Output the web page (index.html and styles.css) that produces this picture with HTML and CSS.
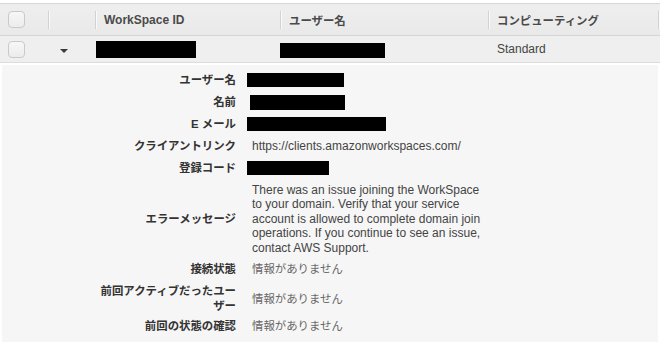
FILE: index.html
```html
<!DOCTYPE html>
<html lang="ja">

<head>
    <meta charset="UTF-8">
    <meta name="viewport" content="width=device-width, initial-scale=1.0">
    <title>WorkSpaces</title>
    <link rel="stylesheet" href="styles.css">
</head>

<body>
    <div class="ws-table">
        <table>
            <colgroup>
                <col class="col-check">
                <col class="col-toggle">
                <col class="col-id">
                <col class="col-user">
                <col class="col-compute">
            </colgroup>
            <thead>
                <tr>
                    <th><span class="checkbox"></span></th>
                    <th class="sep"></th>
                    <th class="sep">WorkSpace ID</th>
                    <th class="sep jp">ユーザー名</th>
                    <th class="sep sep-end jp">コンピューティング</th>
                </tr>
            </thead>
            <tbody>
                <tr>
                    <td><span class="checkbox"></span></td>
                    <td class="toggle"><span class="caret"></span></td>
                    <td><span class="redacted redacted-id"></span></td>
                    <td><span class="redacted redacted-user"></span></td>
                    <td>Standard</td>
                </tr>
            </tbody>
        </table>

        <!-- expanded details of the selected WorkSpace -->
        <div class="details">
            <div class="detail-row">
                <div class="detail-label">ユーザー名</div>
                <div class="detail-value"><span class="redacted redacted-username"></span></div>
            </div>
            <div class="detail-row">
                <div class="detail-label">名前</div>
                <div class="detail-value"><span class="redacted redacted-name"></span></div>
            </div>
            <div class="detail-row">
                <div class="detail-label">E メール</div>
                <div class="detail-value"><span class="redacted redacted-mail"></span></div>
            </div>
            <div class="detail-row">
                <div class="detail-label">クライアントリンク</div>
                <div class="detail-value">https://clients.amazonworkspaces.com/</div>
            </div>
            <div class="detail-row">
                <div class="detail-label">登録コード</div>
                <div class="detail-value"><span class="redacted redacted-code"></span></div>
            </div>
            <div class="detail-row">
                <div class="detail-label">エラーメッセージ</div>
                <div class="detail-value error-text">There was an issue joining the WorkSpace to your domain. Verify that your service account is allowed to complete domain join operations. If you continue to see an issue, contact AWS Support.</div>
            </div>
            <div class="detail-row">
                <div class="detail-label">接続状態</div>
                <div class="detail-value empty">情報がありません</div>
            </div>
            <div class="detail-row">
                <div class="detail-label">前回アクティブだったユー<br>ザー</div>
                <div class="detail-value empty">情報がありません</div>
            </div>
            <div class="detail-row last">
                <div class="detail-label">前回の状態の確認</div>
                <div class="detail-value empty">情報がありません</div>
            </div>
        </div>
    </div>
</body>

</html>
```

FILE: styles.css
```css
body {
    font-family: "Liberation Sans", Arial, "Noto Sans CJK JP", sans-serif;
    font-size: 12px;
    color: #444;
    background-color: #fff;
    margin: 0;
    padding: 3px 0 0 0;
}

.jp {
    font-size: 11.4px;
}

.ws-table table {
    width: 660px;
    border-collapse: collapse;
    table-layout: fixed;
    border-top: 1px solid #d8d8d8;
}

.col-check {
    width: 48px;
}

.col-toggle {
    width: 47px;
}

.col-id {
    width: 185px;
}

.col-user {
    width: 208px;
}

.ws-table th {
    position: relative;
    height: 31px;
    padding: 0 0 0 9px;
    background: linear-gradient(#eeeeee, #e9e9e9);
    border-bottom: 1px solid #d6d6d6;
    text-align: left;
    font-weight: bold;
    color: #4a4a4a;
}

.ws-table th:first-child,
.ws-table td:first-child {
    padding-left: 8px;
}

/* embossed column dividers in the header */
.ws-table th.sep::before {
    content: "";
    position: absolute;
    left: 0;
    top: 7px;
    bottom: 6px;
    width: 1px;
    background-color: #d2d2d2;
    box-shadow: 1px 0 0 #fafafa;
}

.ws-table th.sep-end::after {
    content: "";
    position: absolute;
    right: 1px;
    top: 7px;
    bottom: 6px;
    width: 1px;
    background-color: #d2d2d2;
    box-shadow: 1px 0 0 #fafafa;
}

.ws-table td {
    height: 26px;
    padding: 0 0 0 9px;
    background-color: #efefef;
    border-bottom: 1px solid #dcdcdc;
    vertical-align: middle;
}

.ws-table td:nth-child(3) {
    padding-left: 1px;
}

.ws-table td:nth-child(4) {
    padding-left: 0;
}

.checkbox {
    display: block;
    width: 15px;
    height: 15px;
    border: 1px solid #c9c9c9;
    border-radius: 4px;
    background: linear-gradient(#f7f7f7, #ececec);
}

.ws-table td.toggle {
    padding-left: 12px;
}

.caret {
    display: block;
    width: 0;
    height: 0;
    margin-top: 3px;
    border-left: 4px solid transparent;
    border-right: 4px solid transparent;
    border-top: 4px solid #3a3a3a;
}

.redacted {
    display: block;
    background-color: #000;
}

.redacted-id {
    width: 100px;
    height: 17px;
}

.redacted-user {
    width: 105px;
    height: 15px;
    margin-top: 2px;
}

.details {
    margin: 2px 2px 0 2px;
    padding: 4px 0 5px 0;
    background-color: #f6f6f6;
}

.detail-row {
    display: grid;
    grid-template-columns: 234px 1fr;
    column-gap: 16px;
    align-items: center;
    padding: 3.7px 0;
    line-height: 14.5px;
}

.detail-row.last {
    padding-top: 2px;
}

.detail-label {
    text-align: right;
    font-weight: bold;
    font-size: 11.4px;
    color: #333;
}

.detail-value {
    color: #444;
}

.error-text {
    width: 240px;
}

.empty {
    font-size: 11.4px;
    color: #666;
}

.detail-value .redacted {
    margin-left: -5px;
    height: 14px;
}

.redacted-username {
    width: 97px;
}

.redacted-name {
    width: 95px;
    margin-left: -2px !important;
    height: 15px !important;
}

.redacted-mail {
    width: 139px;
}

.redacted-code {
    width: 82px;
}
```
